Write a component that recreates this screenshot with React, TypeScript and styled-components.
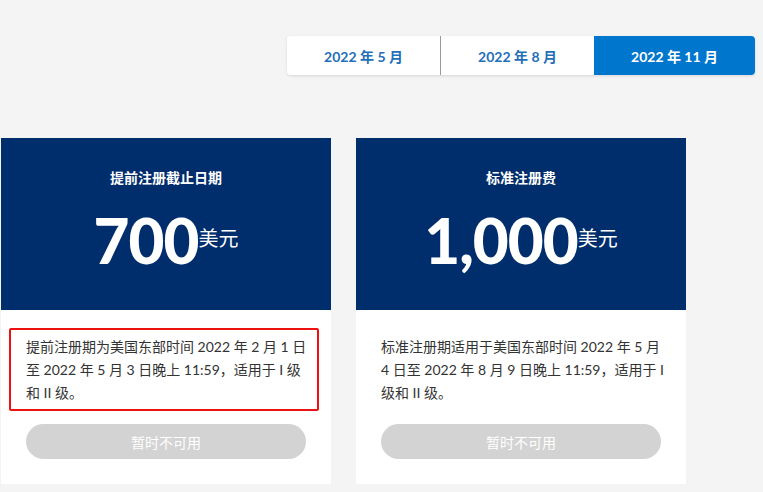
import React from 'react'
import styled, { createGlobalStyle } from 'styled-components'

const GlobalStyle = createGlobalStyle`
  body {
    margin: 0;
    background: #f4f4f4;
    font-family: Lato, "Noto Sans CJK SC", sans-serif;
  }
`

const Page = styled.div`
  width: 763px;
  height: 492px;
  overflow: hidden;
  padding-top: 36px;
  box-sizing: border-box;
`

const TabsRow = styled.div`
  display: flex;
  justify-content: flex-end;
  padding-right: 8px;
`

const Tabs = styled.div`
  display: flex;
  height: 39px;
  background: #fff;
  border-radius: 4px;
  box-shadow: 0 1px 3px rgba(0, 0, 0, 0.12);
  overflow: hidden;
`

interface TabProps {
  $active?: boolean
  $width: number
  $divider?: boolean
}

const Tab = styled.div<TabProps>`
  width: ${({ $width }) => $width}px;
  display: flex;
  align-items: center;
  justify-content: center;
  font-size: 14px;
  font-weight: 700;
  color: ${({ $active }) => ($active ? '#fff' : '#1f6fb9')};
  background: ${({ $active }) => ($active ? '#0077cc' : '#fff')};
  border-right: ${({ $divider }) => ($divider ? '1px solid #9a9a9a' : 'none')};
`

const Cards = styled.div`
  display: flex;
  gap: 25px;
  margin-top: 63px;
  padding-left: 1px;
`

const Card = styled.div`
  width: 330px;
  background: #fff;
`

const CardHead = styled.div`
  height: 172px;
  background: #002d6b;
  color: #fff;
  display: flex;
  flex-direction: column;
  align-items: center;
  padding-top: 30px;
  box-sizing: border-box;
`

const Title = styled.div`
  font-size: 14px;
  font-weight: 700;
  line-height: 20px;
`

const Price = styled.div`
  display: flex;
  align-items: center;
  margin-top: 16px;
`

const Amount = styled.span`
  font-size: 62px;
  font-weight: 900;
  line-height: 72px;
  letter-spacing: -1px;
`

const Currency = styled.span`
  font-size: 20px;
  line-height: 24px;
  margin-top: -4px;
`

const CardBody = styled.div`
  padding: 25px 25px 25px;
`

const Desc = styled.p<{ $marked?: boolean }>`
  position: relative;
  margin: 0 -5px 0 0;
  font-size: 14px;
  line-height: 23px;
  color: #333;
  ${({ $marked }) =>
    $marked &&
    `
    &::after {
      content: '';
      position: absolute;
      left: -17px;
      right: -8px;
      top: -7px;
      bottom: -7px;
      border: 2px solid #ee1111;
      border-radius: 2px;
    }
  `}
`

const Button = styled.div`
  margin-top: 20px;
  height: 35px;
  border-radius: 18px;
  background: #d3d3d3;
  color: #fff;
  font-size: 14px;
  display: flex;
  align-items: center;
  justify-content: center;
`

const plans = [
  {
    title: '提前注册截止日期',
    amount: '700',
    desc: '提前注册期为美国东部时间 2022 年 2 月 1 日至 2022 年 5 月 3 日晚上 11:59，适用于 I 级和 II 级。',
    marked: true,
  },
  {
    title: '标准注册费',
    amount: '1,000',
    desc: '标准注册期适用于美国东部时间 2022 年 5 月 4 日至 2022 年 8 月 9 日晚上 11:59，适用于 I 级和 II 级。',
    marked: false,
  },
]

export default function App() {
  return (
    <Page>
      <GlobalStyle />
      <TabsRow>
        <Tabs>
          <Tab $width={153} $divider>2022 年 5 月</Tab>
          <Tab $width={153}>2022 年 8 月</Tab>
          <Tab $width={161} $active>2022 年 11 月</Tab>
        </Tabs>
      </TabsRow>
      <Cards>
        {plans.map((p) => (
          <Card key={p.title}>
            <CardHead>
              <Title>{p.title}</Title>
              <Price>
                <Amount>{p.amount}</Amount>
                <Currency>美元</Currency>
              </Price>
            </CardHead>
            <CardBody>
              <Desc $marked={p.marked}>{p.desc}</Desc>
              <Button>暂时不可用</Button>
            </CardBody>
          </Card>
        ))}
      </Cards>
    </Page>
  )
}
